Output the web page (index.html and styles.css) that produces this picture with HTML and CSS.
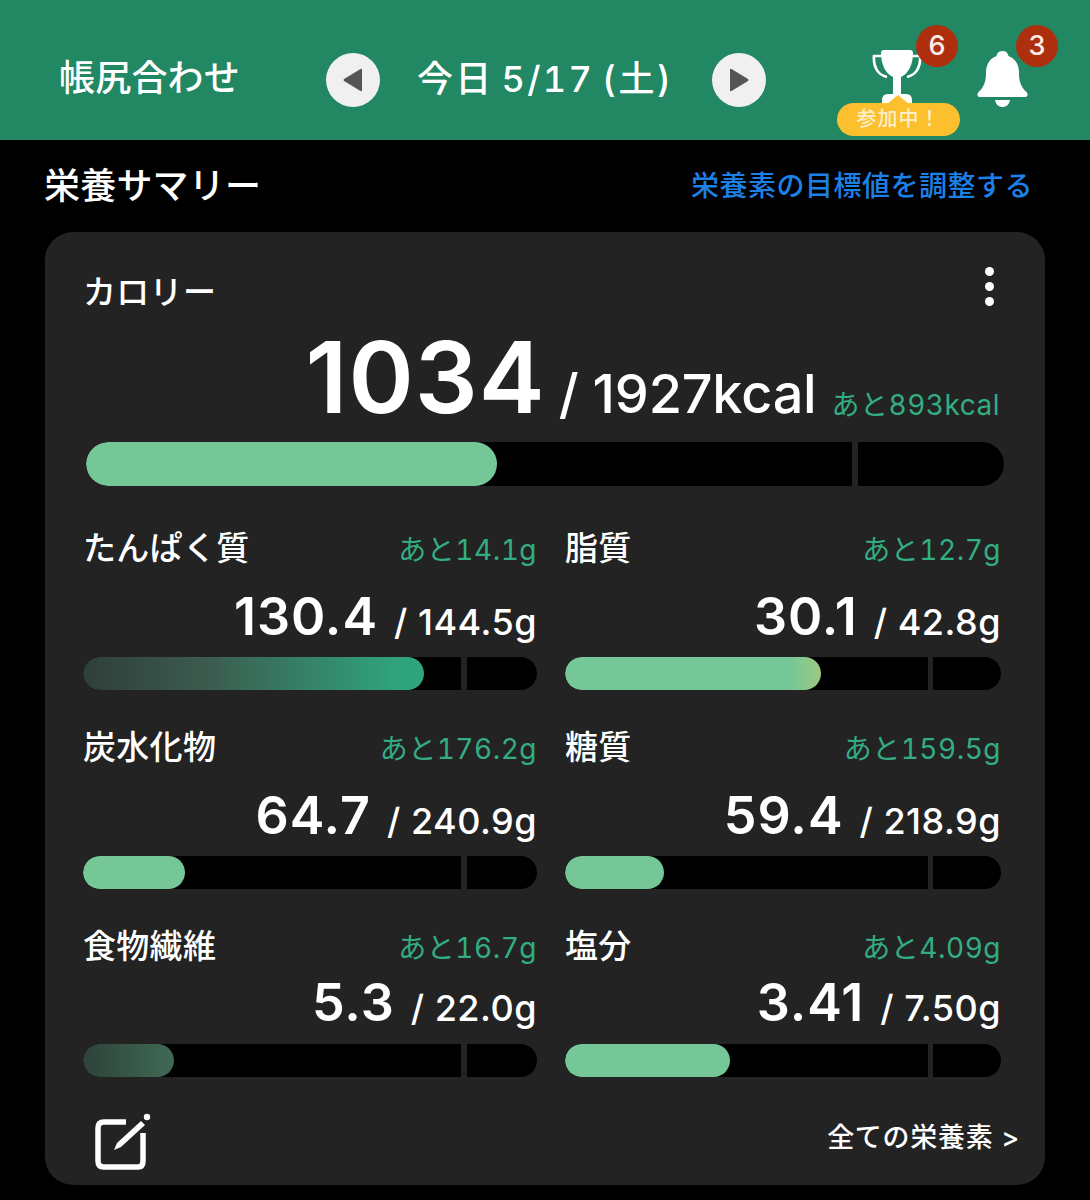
FILE: index.html
```html
<!DOCTYPE html>
<html lang="ja">
<head>
<meta charset="utf-8">
<title>栄養サマリー</title>
<link rel="stylesheet" href="styles.css">
</head>
<body>
<header class="topbar">
  <div class="topbar-title">帳尻合わせ</div>
  <button class="round-btn"><svg class="arrow" viewBox="0 0 20 24"><path d="M19 2 V22 Q19 24 17.5 23 L1 13 Q0 12 1 11 L17.5 1 Q19 0 19 2Z"/></svg></button>
  <div class="date">今日 5/17 (土)</div>
  <button class="round-btn"><svg class="arrow" viewBox="0 0 20 24"><path d="M1 2 V22 Q1 24 2.500 23 L19 13 Q20 12 19 11 L2.500 1 Q1 0 1 2Z"/></svg></button>
  <div class="topbar-icons">
    <div class="icon-trophy">
      <svg class="trophy" viewBox="0 0 50 56">
        <path class="trophy-handle" d="M10 6 H2 C1 17 6 25 15 27"/>
        <path class="trophy-handle" d="M40 6 H48 C49 17 44 25 35 27"/>
        <path class="trophy-fill" d="M12 0 H38 Q41 0 41 3 C41 15 36 24 29 27 V44 H34 Q40 44 40 50 V56 H10 V50 Q10 44 16 44 H21 V27 C14 24 9 15 9 3 Q9 0 12 0Z"/>
      </svg>
      <span class="badge badge-trophy">6</span>
      <div class="pill">参加中！</div>
    </div>
    <div class="icon-bell">
      <svg class="bell" viewBox="0 0 51 56">
        <path class="trophy-fill" d="M25.500 0 C21 0 20 3 19.500 5 C12 8 9 14 9 22 C9 32 6 37 1.500 41 C-0.500 43 0.500 46 3 46 H48 C50.500 46 51.500 43 49.500 41 C45 37 42 32 42 22 C42 14 39 8 31.500 5 C31 3 30 0 25.500 0Z"/>
        <path class="trophy-fill" d="M18 49 H33 C32 54 29 56 25.500 56 C22 56 19 54 18 49Z"/>
      </svg>
      <span class="badge badge-bell">3</span>
    </div>
  </div>
</header>

<section class="summary-head">
  <h1 class="summary-title">栄養サマリー</h1>
  <a class="summary-link">栄養素の目標値を調整する</a>
</section>

<main class="card">
  <div class="card-head">
    <div class="label">カロリー</div>
    <div class="dots"><i></i><i></i><i></i></div>
  </div>
  <div class="total">
    <span class="total-now">1034</span>
    <span class="total-goal">/ 1927kcal</span>
    <span class="remain">あと893kcal</span>
  </div>
  <div class="bar bar-big">
    <div class="fill fill-light" style="width:44.8%"></div>
    <i class="tick tick-big"></i>
  </div>

  <div class="grid">
    <div class="nutrient left">
      <div class="row"><div class="label">たんぱく質</div><div class="remain">あと14.1g</div></div>
      <div class="value"><span class="now">130.4</span><span class="goal">/ 144.5g</span></div>
      <div class="bar"><div class="fill fill-dark-strong" style="width:75.1%"></div><i class="tick"></i></div>
    </div>
    <div class="nutrient right">
      <div class="row"><div class="label">脂質</div><div class="remain">あと12.7g</div></div>
      <div class="value"><span class="now">30.1</span><span class="goal">/ 42.8g</span></div>
      <div class="bar"><div class="fill fill-warm" style="width:58.7%"></div><i class="tick"></i></div>
    </div>
    <div class="nutrient left">
      <div class="row"><div class="label">炭水化物</div><div class="remain">あと176.2g</div></div>
      <div class="value"><span class="now">64.7</span><span class="goal">/ 240.9g</span></div>
      <div class="bar"><div class="fill fill-light" style="width:22.5%"></div><i class="tick"></i></div>
    </div>
    <div class="nutrient right">
      <div class="row"><div class="label">糖質</div><div class="remain">あと159.5g</div></div>
      <div class="value"><span class="now">59.4</span><span class="goal">/ 218.9g</span></div>
      <div class="bar"><div class="fill fill-light" style="width:22.7%"></div><i class="tick"></i></div>
    </div>
    <div class="nutrient left compact">
      <div class="row"><div class="label">食物繊維</div><div class="remain">あと16.7g</div></div>
      <div class="value"><span class="now">5.3</span><span class="goal">/ 22.0g</span></div>
      <div class="bar"><div class="fill fill-dark" style="width:20%"></div><i class="tick"></i></div>
    </div>
    <div class="nutrient right compact">
      <div class="row"><div class="label">塩分</div><div class="remain">あと4.09g</div></div>
      <div class="value"><span class="now">3.41</span><span class="goal">/ 7.50g</span></div>
      <div class="bar"><div class="fill fill-light" style="width:37.8%"></div><i class="tick"></i></div>
    </div>
  </div>

  <footer class="card-foot">
    <svg class="edit" viewBox="0 0 56 58">
      <path class="edit-box" d="M31 9 H9 Q3 9 3 15 V48 Q3 54 9 54 H43 Q48 54 48 48 V20"/>
      <path class="edit-pen" d="M19 37 L22 30 L46 8 L50 12 L26 34Z"/>
      <circle class="edit-pen" cx="52" cy="4" r="3.200"/>
    </svg>
    <a class="all-link">全ての栄養素 &gt;</a>
  </footer>
</main>
</body>
</html>
```
FILE: styles.css
```css
* { box-sizing: border-box; }
html, body { margin: 0; padding: 0; }
body {
  width: 1090px;
  height: 1200px;
  overflow: hidden;
  background: #000;
  color: #fff;
  font-family: "Inter", "Noto Sans CJK JP", sans-serif;
}

.topbar {
  display: flex;
  align-items: center;
  height: 140px;
  padding-left: 59px;
  padding-top: 20px;
  background: #228763;
}
.topbar-title {
  width: 267px;
  font-size: 36px;
  font-weight: 500;
  line-height: 44px;
  margin-top: -4px;
  letter-spacing: 0.2px;
}
.round-btn {
  display: flex;
  align-items: center;
  justify-content: center;
  width: 54px;
  height: 54px;
  padding: 0;
  border: 0;
  border-radius: 50%;
  background: #f0f0f0;
  margin-top: -1px;
}
.arrow { width: 20px; height: 24px; fill: #555; }
.date {
  width: 332px;
  padding-left: 37px;
  font-size: 36px;
  font-weight: 500;
  line-height: 44px;
  margin-top: -2px;
  white-space: nowrap;
  font-variant-numeric: tabular-nums;
  letter-spacing: 2.3px;
  word-spacing: -4px;
}
.topbar-icons {
  display: flex;
  margin-left: 106px;
  margin-top: -14px;
}
.icon-trophy { position: relative; width: 50px; height: 56px; margin-top: 10px; }
.trophy { display: block; width: 50px; height: 56px; }
.trophy-fill { fill: #fff; }
.trophy-handle { fill: none; stroke: #fff; stroke-width: 2.6; }
.icon-bell { position: relative; width: 51px; height: 56px; margin-left: 55px; margin-top: 11px; }
.bell { display: block; width: 51px; height: 56px; }
.badge {
  position: absolute;
  display: flex;
  align-items: center;
  justify-content: center;
  width: 42px;
  height: 42px;
  border-radius: 50%;
  background: #ae2f0e;
  color: #fbeee8;
  font-size: 27px;
  font-weight: 500;
}
.badge-trophy { left: 44px; top: -25px; }
.badge-bell { left: 39px; top: -26px; }
.pill {
  position: absolute;
  left: -35px;
  top: 53px;
  width: 123px;
  height: 33px;
  border-radius: 17px;
  background: #fcbf2d;
  color: #fdf0c8;
  font-size: 20px;
  font-weight: 500;
  line-height: 33px;
  text-align: center;
  letter-spacing: 1px;
}
.pill::before {
  content: "";
  position: absolute;
  left: 50px;
  top: -8px;
  width: 0;
  height: 0;
  border-left: 11px solid transparent;
  border-right: 11px solid transparent;
  border-bottom: 9px solid #fcbf2d;
}

.summary-head {
  display: flex;
  align-items: center;
  justify-content: space-between;
  height: 92px;
  padding: 0 57px 0 44px;
}
.summary-title {
  margin: 0;
  font-size: 36px;
  font-weight: 500;
  line-height: 44px;
  letter-spacing: 0.2px;
}
.summary-link {
  font-size: 28px;
  font-weight: 500;
  line-height: 36px;
  letter-spacing: 0.5px;
  color: #1c80e6;
}

.card {
  width: 1000px;
  height: 953px;
  margin-left: 45px;
  padding: 40px 41px 0 38px;
  border-radius: 28px;
  background: #232323;
}
.card-head {
  display: flex;
  align-items: center;
  justify-content: space-between;
  height: 40px;
}
.label {
  font-size: 33px;
  font-weight: 500;
  line-height: 40px;
  letter-spacing: 0.3px;
  white-space: nowrap;
}
.dots {
  display: flex;
  flex-direction: column;
  gap: 6px;
  margin: -12px 10px 0 0;
}
.dots i {
  display: block;
  width: 9px;
  height: 9px;
  border-radius: 50%;
  background: #fff;
}
.total {
  display: flex;
  align-items: baseline;
  justify-content: flex-end;
  height: 130px;
  padding-right: 4px;
  line-height: 130px;
  white-space: nowrap;
}
.total-now {
  font-size: 99px;
  font-weight: 600;
  letter-spacing: 1px;
  margin-right: 13px;
}
.total-goal {
  font-size: 54px;
  font-weight: 500;
  letter-spacing: -0.2px;
  margin-right: 15px;
}
.total .remain { transform: translateY(2px); }
.remain {
  color: #33ad82;
  font-size: 28px;
  letter-spacing: 0.5px;
  white-space: nowrap;
  font-variant-numeric: tabular-nums;
}
.bar {
  position: relative;
  height: 33px;
  border-radius: 17px;
  background: #000;
  overflow: hidden;
}
.bar-big {
  height: 44px;
  border-radius: 22px;
  margin-left: 3px;
}
.fill { height: 100%; border-radius: 22px; }
.fill-light { background: #75c797; }
.fill-warm { background: linear-gradient(90deg, #75c797 88%, #9ec981 100%); }
.fill-dark-strong { background: linear-gradient(90deg, #2e3f39 0%, #3c5a4e 35%, #30a47c 92%); }
.fill-dark { background: linear-gradient(90deg, #2f4239 0%, #3f6a55 100%); }
.tick {
  position: absolute;
  top: 0;
  bottom: 0;
  width: 6px;
  background: #232323;
}
.left .tick { right: 70px; }
.right .tick { right: 68px; width: 5px; }
.tick-big { right: 146px; }

.grid {
  display: grid;
  grid-template-columns: 454px 436px;
  column-gap: 28px;
  margin-top: 42px;
}
.nutrient { height: 199px; }
.nutrient.compact { height: 188px; }
.row {
  display: flex;
  align-items: baseline;
  justify-content: space-between;
  height: 40px;
  line-height: 40px;
}
.value {
  display: flex;
  align-items: baseline;
  justify-content: flex-end;
  height: 89px;
  line-height: 98px;
  white-space: nowrap;
}
.compact .value { height: 78px; line-height: 74px; }
.now {
  font-size: 52px;
  font-weight: 600;
  letter-spacing: 1px;
  margin-right: 16px;
}
.goal {
  font-size: 36px;
  font-weight: 500;
  letter-spacing: 0.5px;
}
.card-foot {
  display: flex;
  align-items: center;
  justify-content: space-between;
  margin: -1px -16px 0 12px;
}
.edit { display: block; width: 56px; height: 58px; }
.edit-box { fill: none; stroke: #fff; stroke-width: 5.5; }
.edit-pen { fill: #fff; }
.all-link {
  font-size: 27px;
  font-weight: 500;
  line-height: 36px;
  letter-spacing: 0.7px;
  margin-top: -8px;
}
```
